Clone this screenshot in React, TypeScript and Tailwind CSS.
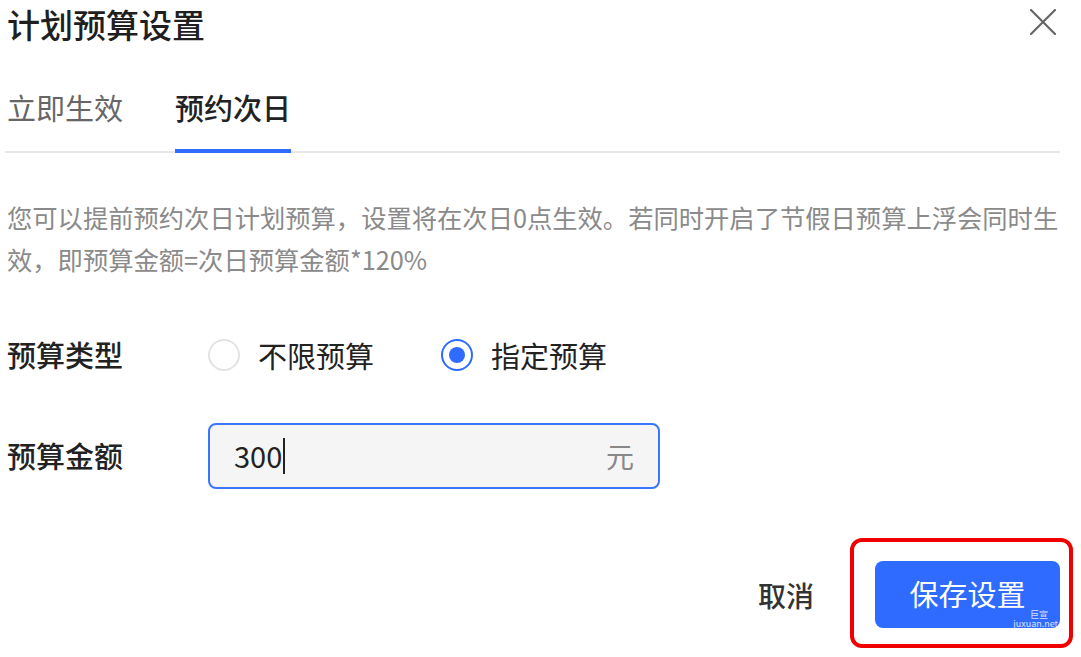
import { useState } from "react"

const font = { fontFamily: '"Noto Sans CJK SC", "Noto Sans", sans-serif' }

type BudgetType = 'unlimited' | 'fixed'

function Radio({ checked, label, onClick }: { checked: boolean, label: string, onClick: () => void }) {
    return (
        <button type="button" onClick={onClick} className="flex items-center gap-[18px]">
            <span className={`flex h-[32px] w-[32px] items-center justify-center rounded-full border-2 ${checked ? 'border-[#2f6bff]' : 'border-[#e3e3e3]'}`}>
                {checked && <span className="h-[16px] w-[16px] rounded-full bg-[#2f6bff]"></span>}
            </span>
            <span className="text-[29px] leading-[40px] text-[#222]">{label}</span>
        </button>
    )
}

export default function App() {
    const [tab, setTab] = useState(1)
    const [budgetType, setBudgetType] = useState<BudgetType>('fixed')
    const amount = '300'

    const tabs = ['立即生效', '预约次日']

    return (
        <div style={font} className="min-h-[657px] w-[1081px] bg-white pl-[7px] pr-[21px]">
            <div className="flex h-[48px] items-center justify-between">
                <h2 className="text-[33px] font-medium leading-[48px] text-[#1f1f1f]">计划预算设置</h2>
                <button type="button" className="mr-[4px] -mt-[4px] text-[#666]">
                    <svg width="26" height="26" viewBox="0 0 26 26" fill="none" stroke="currentColor" strokeWidth="2.2" strokeLinecap="round">
                        <path d="M1 1L25 25M25 1L1 25" />
                    </svg>
                </button>
            </div>

            <div className="-ml-[2px] mt-[36px] flex gap-[52px] border-b-2 border-[#e8e8e8] pl-[2px]">
                {tabs.map((t, i) => (
                    <button key={t} type="button" onClick={() => setTab(i)}
                        className={`-mb-[2px] border-b-4 pb-[19px] text-[29px] leading-[46px] ${tab === i ? 'border-[#2f6bff] font-medium text-[#222]' : 'border-transparent text-[#666]'}`}>
                        {t}
                    </button>
                ))}
            </div>

            <p className="mt-[43px] text-[25.3px] leading-[42px] text-[#8a8a8a]">
                您可以提前预约次日计划预算，设置将在次日0点生效。若同时开启了节假日预算上浮会同时生效，即预算金额=次日预算金额*120%
            </p>

            <div className="mt-[51px] flex h-[48px] items-center">
                <span className="w-[201px] text-[29px] font-medium text-[#222]">预算类型</span>
                <div className="flex gap-[67px]">
                    <Radio checked={budgetType === 'unlimited'} label="不限预算" onClick={() => setBudgetType('unlimited')} />
                    <Radio checked={budgetType === 'fixed'} label="指定预算" onClick={() => setBudgetType('fixed')} />
                </div>
            </div>

            <div className="mt-[44px] flex items-center">
                <span className="w-[201px] text-[29px] font-medium text-[#222]">预算金额</span>
                <div className="flex h-[66px] w-[452px] items-center rounded-[8px] border-2 border-[#3a76ff] bg-[#f5f5f5] pl-[24px] pr-[24px]">
                    <div className="flex flex-1 items-center">
                        <span className="text-[29px] text-[#222]">{amount}</span>
                        <span className="ml-[1px] h-[36px] w-[2px] bg-[#222]"></span>
                    </div>
                    <span className="text-[28px] text-[#888]">元</span>
                </div>
            </div>

            <div className="mt-[72px] flex items-center justify-end gap-[61px]">
                <button type="button" className="text-[28px] font-medium text-[#333]">取消</button>
                <div className="relative">
                    <button type="button" className="relative h-[67px] w-[185px] rounded-[8px] bg-[#2f6bff] pb-[3px] text-[29px] leading-[36px] text-white">
                        保存设置
                        <span className="absolute bottom-0 right-[2px] flex flex-col items-end text-[9px] leading-[9px] text-white/80">
                            <span className="mr-[10px]">巨宣</span>
                            <span>juxuan.net</span>
                        </span>
                    </button>
                    <span className="pointer-events-none absolute -bottom-[20px] -left-[25px] -right-[13px] -top-[23px] rounded-[12px] border-4 border-[#f00000]"></span>
                </div>
            </div>
        </div>
    )
}
